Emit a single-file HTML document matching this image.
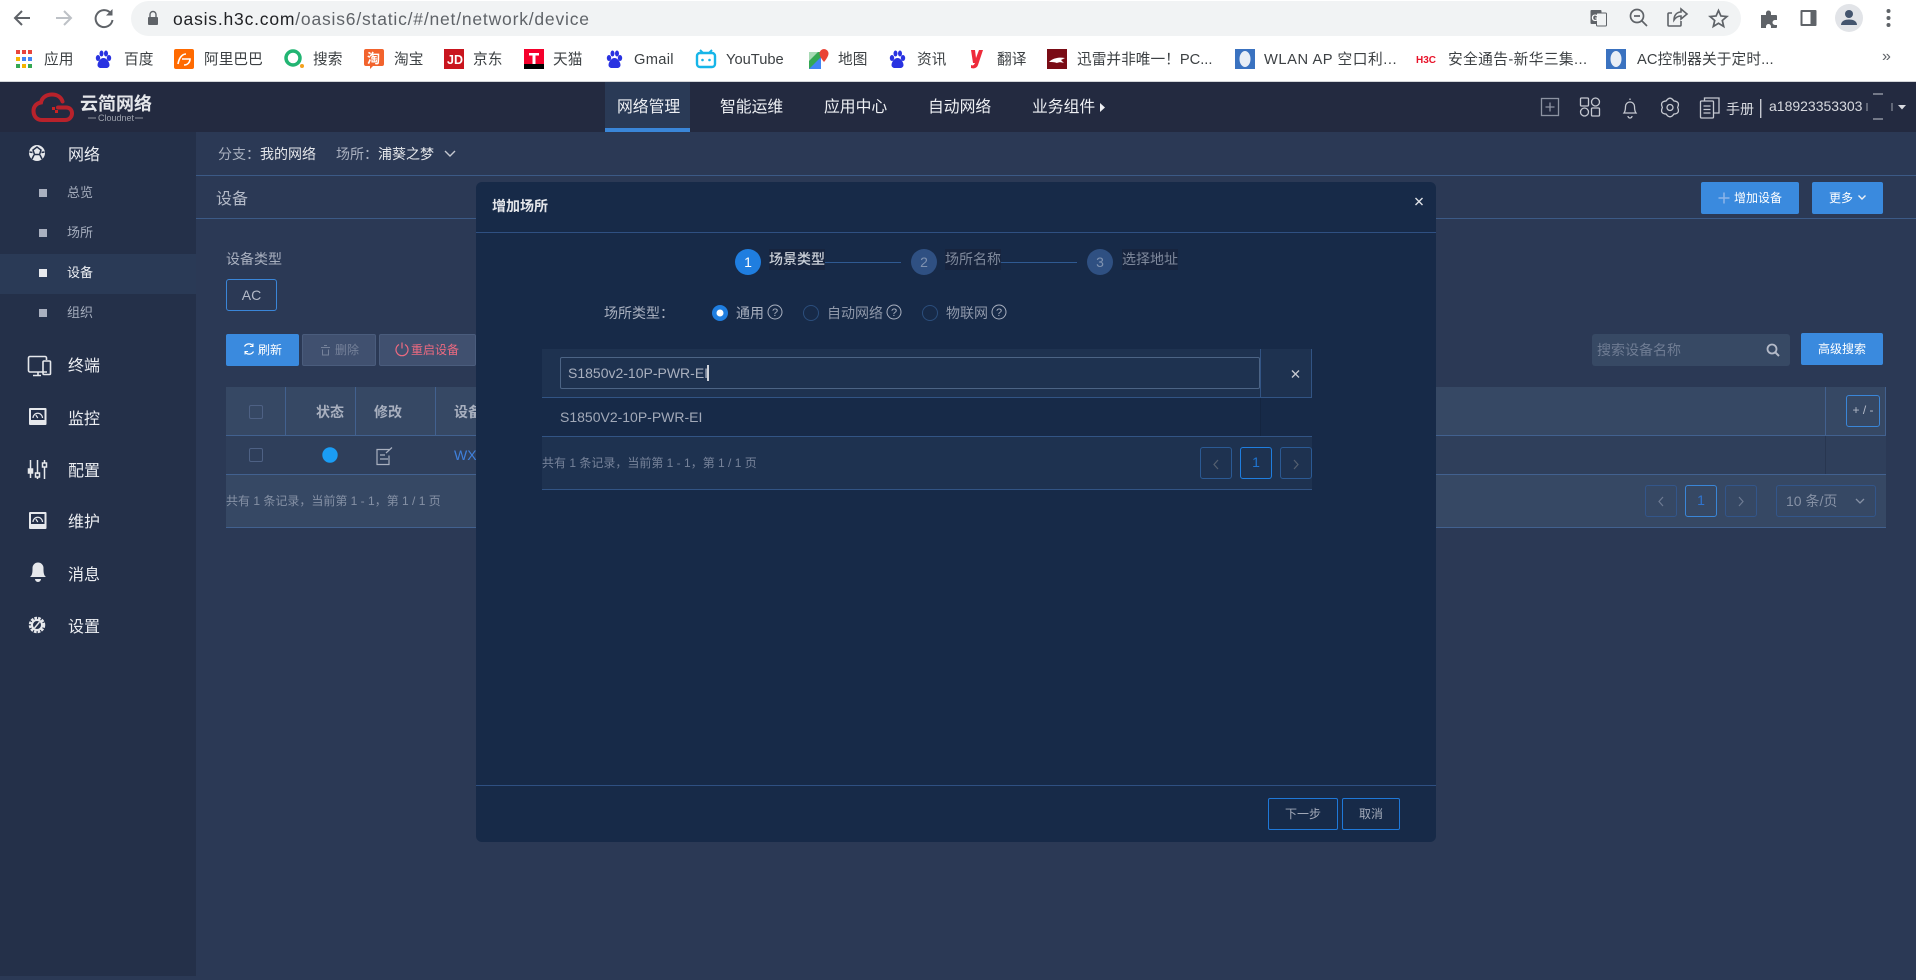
<!DOCTYPE html>
<html lang="zh"><head><meta charset="utf-8"><title>oasis</title>
<style>
html,body{margin:0;padding:0;width:1916px;height:980px;overflow:hidden;background:#2b3955}
body{position:relative;font-family:"Liberation Sans","Noto Sans CJK SC",sans-serif;font-size:14px;color:#c8ccd6}
.b,.t,svg.l{position:absolute}
.t{white-space:nowrap;line-height:20px}
svg.l{left:0;top:0;width:1916px;height:980px;pointer-events:none}
.bm{font-size:14.7px;color:#3c4043}
.nav{font-size:15.8px;color:#eef0f4}
.s1{font-size:16px;color:#eceef2}
.s2{font-size:13px;color:#a5adbd}
.g{color:#a9b0bf}
.btn{position:absolute;background:#3a8ade;border-radius:2px;color:#fff;text-align:center;box-sizing:border-box;line-height:32px;font-size:12px}
.pg{position:absolute;box-sizing:border-box;width:32px;height:32px;border:1px solid #33568a;border-radius:3px}
</style></head><body>

<!-- browser chrome -->
<div class="b" style="left:0;top:0;width:1916px;height:81px;background:#fff"></div>
<div class="b" style="left:0;top:81px;width:1916px;height:1px;background:#d3d5d9"></div>
<div class="b" style="left:131px;top:1px;width:1610px;height:35px;border-radius:18px;background:#f1f3f4"></div>
<div class="t" style="left:173px;top:9px;font-size:17.5px;letter-spacing:.8px;color:#5f6368;line-height:20px"><span style="color:#202124">oasis.h3c.com</span>/oasis6/static/#/net/network/device</div>
<div class="t bm" style="left:44px;top:50px">应用</div>
<div class="t bm" style="left:124px;top:50px">百度</div>
<div class="t bm" style="left:204px;top:50px">阿里巴巴</div>
<div class="t bm" style="left:313px;top:50px">搜索</div>
<div class="t bm" style="left:394px;top:50px">淘宝</div>
<div class="t bm" style="left:473px;top:50px">京东</div>
<div class="t bm" style="left:553px;top:50px">天猫</div>
<div class="t bm" style="left:634px;top:50px;letter-spacing:.3px">Gmail</div>
<div class="t bm" style="left:726px;top:50px">YouTube</div>
<div class="t bm" style="left:838px;top:50px">地图</div>
<div class="t bm" style="left:917px;top:50px">资讯</div>
<div class="t bm" style="left:997px;top:50px">翻译</div>
<div class="t bm" style="left:1077px;top:50px">迅雷并非唯一！PC...</div>
<div class="t bm" style="left:1264px;top:50px;letter-spacing:.55px">WLAN AP 空口利...</div>
<div class="t bm" style="left:1448px;top:50px;letter-spacing:.4px">安全通告-新华三集...</div>
<div class="t bm" style="left:1637px;top:50px;letter-spacing:.1px">AC控制器关于定时...</div>
<div class="t bm" style="left:1882px;top:47px;font-size:16px;color:#5f6368">»</div>

<!-- nav -->
<div class="b" style="left:0;top:82px;width:1916px;height:50px;background:#232a40"></div>
<div class="b" style="left:605px;top:82px;width:85px;height:50px;background:#2a3a56"></div>
<div class="b" style="left:605px;top:128px;width:85px;height:4px;background:#3a86d8"></div>
<div class="t nav" style="left:617px;top:98px">网络管理</div>
<div class="t nav" style="left:720px;top:98px">智能运维</div>
<div class="t nav" style="left:824px;top:98px">应用中心</div>
<div class="t nav" style="left:928px;top:98px">自动网络</div>
<div class="t nav" style="left:1032px;top:98px">业务组件</div>
<div class="t" style="left:80px;top:94px;font-size:18px;font-weight:700;color:#e4e6ea">云简网络</div>
<div class="t" style="left:98px;top:111px;font-size:9px;color:#9ea3ad;line-height:14px">Cloudnet</div>
<div class="t" style="left:1726px;top:99px;font-size:14px;color:#d8dae0">手册</div>
<div class="t" style="left:1769px;top:96px;font-size:14px;color:#d8dae0">a18923353303</div>

<!-- sidebar -->
<div class="b" style="left:0;top:132px;width:196px;height:844px;background:#243049"></div>
<div class="b" style="left:0;top:254px;width:196px;height:40px;background:#2a3a56"></div>
<div class="t s1" style="left:68px;top:146px">网络</div>
<div class="t s2" style="left:67px;top:183px">总览</div>
<div class="t s2" style="left:67px;top:223px">场所</div>
<div class="t s2" style="left:67px;top:263px;color:#eef0f4">设备</div>
<div class="t s2" style="left:67px;top:303px">组织</div>
<div class="t s1" style="left:68px;top:357px">终端</div>
<div class="t s1" style="left:68px;top:410px">监控</div>
<div class="t s1" style="left:68px;top:462px">配置</div>
<div class="t s1" style="left:68px;top:513px">维护</div>
<div class="t s1" style="left:68px;top:566px">消息</div>
<div class="t s1" style="left:68px;top:618px">设置</div>

<!-- breadcrumb and titlebar -->
<div class="b" style="left:196px;top:175px;width:1720px;height:1px;background:#3c5a86"></div>
<div class="b" style="left:196px;top:218px;width:1720px;height:1px;background:#3c5a86"></div>
<div class="t g" style="left:218px;top:144px">分支：</div>
<div class="t" style="left:260px;top:144px;color:#e4e6ea">我的网络</div>
<div class="t g" style="left:336px;top:144px">场所：</div>
<div class="t" style="left:378px;top:144px;color:#e4e6ea">浦葵之梦</div>
<div class="t" style="left:216px;top:190px;font-size:16px;color:#b4bac8">设备</div>
<div class="btn" style="left:1701px;top:182px;width:98px;height:32px;text-align:left;padding-left:33px">增加设备</div>
<div class="btn" style="left:1812px;top:182px;width:71px;height:32px;text-align:left;padding-left:17px">更多</div>

<!-- content -->
<div class="t g" style="left:226px;top:249px">设备类型</div>
<div class="b" style="left:226px;top:279px;width:51px;height:32px;box-sizing:border-box;border:1px solid #3a86d8;border-radius:3px;text-align:center;line-height:30px;color:#b4bac8">AC</div>
<div class="btn" style="left:226px;top:334px;width:73px;height:32px;text-align:left;padding-left:32px">刷新</div>
<div class="btn" style="left:302px;top:334px;width:74px;height:32px;background:#40506f;border:1px solid #4a5c7c;color:#76829a;text-align:left;padding-left:32px;line-height:30px">删除</div>
<div class="btn" style="left:379px;top:334px;width:97px;height:32px;background:#40506f;border:1px solid #4a5c7c;color:#ec6a80;text-align:left;padding-left:31px;line-height:30px">重启设备</div>
<div class="b" style="left:1592px;top:334px;width:198px;height:32px;background:#374964;border-radius:3px"></div>
<div class="t" style="left:1597px;top:340px;color:#6f7c93">搜索设备名称</div>
<div class="btn" style="left:1801px;top:333px;width:82px;height:32px">高级搜索</div>

<div class="b" style="left:226px;top:387px;width:1660px;height:48px;background:#364864"></div>
<div class="b" style="left:226px;top:435px;width:1660px;height:1px;background:#42618f"></div>
<div class="b" style="left:226px;top:436px;width:1660px;height:38px;background:#2f3f5b"></div>
<div class="b" style="left:226px;top:474px;width:1660px;height:1px;background:#42618f"></div>
<div class="b" style="left:226px;top:475px;width:1660px;height:52px;background:#364864"></div>
<div class="b" style="left:226px;top:527px;width:1660px;height:1px;background:#42618f"></div>
<div class="b" style="left:285px;top:387px;width:1px;height:48px;background:#42618f"></div>
<div class="b" style="left:355px;top:387px;width:1px;height:48px;background:#42618f"></div>
<div class="b" style="left:435px;top:387px;width:1px;height:48px;background:#42618f"></div>
<div class="b" style="left:1825px;top:387px;width:1px;height:48px;background:#42618f"></div>
<div class="b" style="left:1825px;top:436px;width:1px;height:38px;background:#283650"></div>
<div class="b" style="left:1885px;top:387px;width:1px;height:48px;background:#42618f"></div>
<div class="t g" style="left:316px;top:402px;font-weight:700">状态</div>
<div class="t g" style="left:374px;top:402px;font-weight:700">修改</div>
<div class="t g" style="left:454px;top:402px;font-weight:700">设备</div>
<div class="t" style="left:454px;top:445px;color:#3f80dc;font-size:14px">WX</div>
<div class="t" style="left:226px;top:491px;font-size:12px;color:#8691a5">共有 1 条记录，当前第 1 - 1，第 1 / 1 页</div>
<div class="b" style="left:1846px;top:395px;width:34px;height:32px;box-sizing:border-box;border:1px solid #3a86d8;border-radius:3px;text-align:center;line-height:29px;font-size:12px;color:#b4bac8">+ / -</div>
<div class="pg" style="left:1645px;top:485px"></div>
<div class="pg" style="left:1685px;top:485px;border-color:#3a86d8;text-align:center;line-height:29px;color:#2f74d0;font-size:14px">1</div>
<div class="pg" style="left:1725px;top:485px"></div>
<div class="pg" style="left:1776px;top:485px;width:100px"></div>
<div class="t" style="left:1786px;top:491px;color:#8691a5;font-size:14px">10 条/页</div>

<!-- page icons -->
<svg class="l" viewBox="0 0 1916 980" fill="none">
 <!-- chrome toolbar -->
 <path d="M30 18H16M22 11l-7 7 7 7" stroke="#5f6368" stroke-width="2"/>
 <path d="M56 18h14M64 11l7 7-7 7" stroke="#bdc1c6" stroke-width="2"/>
 <path d="M110.500 13a8.500 8.500 0 1 0 2 7" stroke="#5f6368" stroke-width="2"/><path d="M112.500 9v6.500H106z" fill="#5f6368"/>
 <rect x="148" y="17" width="10" height="8" rx="1" fill="#5f6368"/><path d="M150 17v-2.500a3 3 0 0 1 6 0V17" stroke="#5f6368" stroke-width="1.400"/>
 <g transform="translate(-1.500,0)"><rect x="1592" y="10" width="11" height="14" rx="1" fill="#5f6368"/><rect x="1598" y="13" width="10" height="13" rx="1" fill="#f1f3f4" stroke="#5f6368"/><text x="1593" y="21" font-size="9" font-weight="700" fill="#fff" font-family="Liberation Sans">G</text></g>
 <g transform="translate(-3,0)"><circle cx="1640" cy="16" r="6.500" stroke="#5f6368" stroke-width="1.700"/><path d="M1637 16h6M1645 21l5 5" stroke="#5f6368" stroke-width="1.700"/></g>
 <g transform="translate(-6,0)"><path d="M1678 13h-3a1 1 0 0 0-1 1v11a1 1 0 0 0 1 1h11a1 1 0 0 0 1-1v-4M1680 20c0-5 3-8 7-8V9l6 5-6 5v-3c-3 0-5 1-7 4z" stroke="#5f6368" stroke-width="1.600"/></g>
 <path d="M1718.500 10.500l2.400 5.500 6 .5-4.600 4 1.400 6-5.200-3.200-5.200 3.200 1.400-6-4.600-4 6-.5z" stroke="#5f6368" stroke-width="1.700"/>
 <g transform="translate(-2,0)"><path d="M1763 15h5v-2a2.500 2.500 0 0 1 5 0v2h5a1 1 0 0 1 1 1v4h-2a2.500 2.500 0 0 0 0 5h2v2a1 1 0 0 1-1 1h-5v-1.500a2.500 2.500 0 0 0-5 0V28h-5z" fill="#5f6368"/></g>
 <g transform="translate(-3.500,0)"><rect x="1804" y="10" width="16" height="16" rx="1" fill="#5f6368"/><rect x="1806" y="12" width="8" height="12" fill="#fff"/></g>
 <g transform="translate(-4,0)"><circle cx="1853" cy="18" r="14" fill="#e2e4e8"/><circle cx="1853" cy="14" r="4" fill="#44556e"/><path d="M1845 25c0-4 4-5.500 8-5.500s8 1.500 8 5.500z" fill="#44556e"/></g>
 <g transform="translate(-3.500,0)"><circle cx="1892" cy="11" r="2" fill="#5f6368"/><circle cx="1892" cy="18" r="2" fill="#5f6368"/><circle cx="1892" cy="25" r="2" fill="#5f6368"/></g>

 <!-- bookmark favicons -->
 <g><rect x="16" y="50" width="4" height="4" fill="#e8453c"/><rect x="22" y="50" width="4" height="4" fill="#e8453c"/><rect x="28" y="50" width="4" height="4" fill="#e8453c"/>
 <rect x="16" y="57" width="4" height="4" fill="#f4b400"/><rect x="22" y="57" width="4" height="4" fill="#4285f4"/><rect x="28" y="57" width="4" height="4" fill="#4285f4"/>
 <rect x="16" y="64" width="4" height="4" fill="#34a853"/><rect x="22" y="64" width="4" height="4" fill="#f4b400"/><rect x="28" y="64" width="4" height="4" fill="#34a853"/></g>
 <g fill="#2932e1"><ellipse cx="98" cy="58" rx="2.200" ry="3"/><ellipse cx="101.500" cy="53.500" rx="2" ry="3"/><ellipse cx="106" cy="53.500" rx="2" ry="3"/><ellipse cx="109" cy="58" rx="2.200" ry="3"/><path d="M103.500 58c-3 0-6 4-6 7 0 2 2 3 3 3h6c1 0 3-1 3-3 0-3-3-7-6-7z"/></g>
 <g fill="#2932e1"><ellipse cx="609" cy="58" rx="2.200" ry="3"/><ellipse cx="612.500" cy="53.500" rx="2" ry="3"/><ellipse cx="617" cy="53.500" rx="2" ry="3"/><ellipse cx="620" cy="58" rx="2.200" ry="3"/><path d="M614.500 58c-3 0-6 4-6 7 0 2 2 3 3 3h6c1 0 3-1 3-3 0-3-3-7-6-7z"/></g>
 <g fill="#2932e1"><ellipse cx="892" cy="58" rx="2.200" ry="3"/><ellipse cx="895.500" cy="53.500" rx="2" ry="3"/><ellipse cx="900" cy="53.500" rx="2" ry="3"/><ellipse cx="903" cy="58" rx="2.200" ry="3"/><path d="M897.500 58c-3 0-6 4-6 7 0 2 2 3 3 3h6c1 0 3-1 3-3 0-3-3-7-6-7z"/></g>
 <rect x="174" y="49" width="20" height="20" rx="2" fill="#ff6a00"/><path d="M178 64c1-6 4-10 8-10M182 59h8c0 3-2 6-6 6" stroke="#fff" stroke-width="1.600"/>
 <circle cx="293" cy="58" r="7" stroke="#22b573" stroke-width="3.500"/><circle cx="302" cy="66" r="2" fill="#f4a11d"/>
 <path d="M366 49h16a2 2 0 0 1 2 2v13a2 2 0 0 1-2 2h-9l-3 3v-3h-4a2 2 0 0 1-2-2V51a2 2 0 0 1 2-2z" fill="#f2632d"/><text x="367" y="63" font-size="13" font-weight="700" fill="#fff" font-family="Noto Sans CJK SC">淘</text>
 <rect x="444" y="49" width="20" height="20" fill="#c9151e"/><text x="447" y="64" font-size="12.500" fill="#fff" font-weight="700" font-family="Liberation Sans">JD</text>
 <rect x="524" y="49" width="20" height="20" fill="#f5002b"/><path d="M524 64h20v5h-20z" fill="#000"/><path d="M529 53h10v2.500h-3.500V64h-3V55.500H529z" fill="#fff"/>
 <path d="M700 50l3 3M712 50l-3 3" stroke="#16b5e8" stroke-width="2"/><rect x="697" y="53" width="18" height="14" rx="3" stroke="#16b5e8" stroke-width="2.400"/><circle cx="702.500" cy="60" r="1.300" fill="#16b5e8"/><circle cx="709.500" cy="60" r="1.300" fill="#16b5e8"/>
 <path d="M809 52h12v17h-12z" fill="#34a853"/><path d="M809 69l12-12v12z" fill="#4285f4"/><path d="M809 52h9l-9 9z" fill="#a8dab5"/><path d="M824 49a4.500 4.500 0 0 0-4.500 4.500c0 3.500 4.500 8.500 4.500 8.500s4.500-5 4.500-8.500A4.500 4.500 0 0 0 824 49z" fill="#ea4335"/>
 <path d="M971 50h4l1 8 3-8h4l-5 15c-1 3-4 4-7 3v-3c2 1 3 0 4-2h-2z" fill="#ee2b3b"/>
 <rect x="1047" y="49" width="20" height="20" fill="#7a0c16"/><path d="M1049 62c4-4 10-5 16-4l-4 2 3 3c-3-1-5-1-7 0-3-1-5-1-8-1z" fill="#fff"/>
 <rect x="1235" y="49" width="20" height="20" fill="#3a72c0"/><ellipse cx="1245" cy="59" rx="5.500" ry="8" fill="#e8eef6"/>
 <text x="1416" y="63" font-size="10" font-weight="700" fill="#e8132a" font-family="Liberation Sans">H3C</text>
 <rect x="1606" y="49" width="20" height="20" fill="#3a72c0"/><ellipse cx="1616" cy="59" rx="5.500" ry="8" fill="#e8eef6"/>

 <!-- logo -->
 <path d="M47 120H42C35 120 33.500 114 33.500 111C33.500 106 37 103 41 102.500C42 97 47 94.500 52 94.500C57 94.500 61 97 62.500 101.500M47 120H65C70 120 72 116 72 113.500C72 110 70 107.500 66 107.500H58" stroke="#b8222b" stroke-width="4" stroke-linecap="round"/>
 <rect x="52" y="107" width="3" height="3" fill="#c22"/><rect x="55" y="110" width="3" height="3" fill="#c22"/>
 <path d="M88 118h8M135 118h8" stroke="#8f949e"/>

 <path d="M1100 103l5 4.500-5 4.500z" fill="#eef0f4"/>
 <!-- top right icons -->
 <rect x="1541.500" y="98.500" width="17" height="17" stroke="#8d93a2" stroke-width="1.300"/><path d="M1550 102.500v9M1545.500 107h9" stroke="#8d93a2" stroke-width="1.300"/>
 <g stroke="#c5c8d0" stroke-width="1.300"><rect x="1580.500" y="98" width="8" height="8" rx="1"/><circle cx="1595.500" cy="102" r="4"/><circle cx="1584.500" cy="112" r="4"/><rect x="1591.500" y="108" width="8" height="8" rx="1"/>
 <path d="M1624 113c1.500-2 1.500-4 1.500-6.500a4.500 4.500 0 0 1 9 0c0 2.500 0 4.500 1.500 6.500z M1628 116a2 2 0 0 0 4 0M1630 100v-1.500"/>
 <path d="M1677.600 107.500Q1680.400 113.500 1673.800 114.080Q1670 119.500 1666.200 114.080Q1659.600 113.500 1662.400 107.500Q1659.600 101.500 1666.200 100.920Q1670 95.500 1673.800 100.920Q1680.400 101.500 1677.600 107.500z" stroke-linejoin="round"/><circle cx="1670" cy="107.500" r="3"/>
 <rect x="1700.500" y="101" width="13" height="17" rx="1"/><path d="M1704.500 101v-3h14.500v15h-5.500M1703.500 106h7M1703.500 109.500h7M1703.500 113h7"/></g>
 <rect x="1760" y="99" width="1.400" height="19" fill="#c5c8d0"/>
 <path d="M1867 103v8M1892 103v8" stroke="#9ea3ad"/><path d="M1873 94h10M1873 119h10" stroke="#c5c8d0"/><path d="M1898 105h8l-4 4.500z" fill="#d8dae0"/>

 <!-- sidebar icons -->
 <circle cx="37" cy="153" r="8" fill="#e6e8ec"/><path d="M37 147l-4 3 1.500 4.500h5L41 150zM29.500 152l3 .5M44.500 152l-3 .5M34 155l-2 4M40 155l2 4" stroke="#243049" stroke-width="1.500"/>
 <rect x="39" y="189" width="8" height="8" fill="#a9b0bf"/><rect x="39" y="229" width="8" height="8" fill="#a9b0bf"/><rect x="39" y="269" width="8" height="8" fill="#e8eaee"/><rect x="39" y="309" width="8" height="8" fill="#a9b0bf"/>
 <path d="M47 372H30a1.500 1.500 0 0 1-1.500-1.500V358a1.500 1.500 0 0 1 1.500-1.500h15a1.500 1.500 0 0 1 1.500 1.500v2M38 372v3M33 375.500h8" stroke="#e6e8ec" stroke-width="1.600"/><rect x="43" y="361" width="7.500" height="13.500" rx="1" stroke="#e6e8ec" stroke-width="1.600"/>
 <g><rect x="29" y="408" width="17.500" height="17" rx="1" fill="#e6e8ec"/><rect x="31" y="410" width="13.500" height="10" fill="#243049"/><path d="M33 418a4.700 4.700 0 0 1 9.500 0M37.800 418l-2-3" stroke="#e6e8ec" stroke-width="1.200"/></g>
 <g><rect x="29" y="512" width="17.500" height="17" rx="1" fill="#e6e8ec"/><rect x="31" y="514" width="13.500" height="10" fill="#243049"/><path d="M33 522a4.700 4.700 0 0 1 9.500 0M37.800 522l-2-3" stroke="#e6e8ec" stroke-width="1.200"/></g>
 <g stroke="#e6e8ec" stroke-width="1.500"><path d="M30.500 460v9M30.500 473v5M37.500 460v14M37.500 477v2M44.500 460v3M44.500 467v12"/><rect x="28.500" y="469" width="4" height="4" fill="#e6e8ec"/><rect x="35.500" y="473" width="4" height="4"/><rect x="42.500" y="463" width="4" height="4"/></g>
 <path d="M30 577c2.500-2 2.500-5 2.500-9a5.500 5.500 0 0 1 11 0c0 4 0 7 2.500 9zM35 579a3 3 0 0 0 6 0" fill="#e6e8ec"/>
 <circle cx="37" cy="625" r="6.500" stroke="#e6e8ec" stroke-width="3.500" stroke-dasharray="2.500 1"/><circle cx="37" cy="625" r="5" stroke="#e6e8ec" stroke-width="2"/><path d="M34.500 628l5-6" stroke="#e6e8ec" stroke-width="1.500"/>

 <path d="M445 151l5 5 5-5" stroke="#c5c8d0" stroke-width="1.400"/>
 <path d="M1724 192.500v11M1718.500 198h11" stroke="#8cb4e8" stroke-width="1.500"/>
 <path d="M1858.500 195.500l3.500 3.500 3.500-3.500" stroke="#eef0f4" stroke-width="1.400"/>

 <path d="M244.500 346.500a5 5 0 0 1 8.500-.5M253.500 351.500a5 5 0 0 1-8.500 .5" stroke="#fff" stroke-width="1.300"/><path d="M253 343.500v3h-3M245 354.500v-3h3" stroke="#fff"/>
 <path d="M321 347.500h9M322.500 349.500v5.500h6v-5.500M324 345.500h3" stroke="#76829a"/>
 <path d="M399 344.500a6 6 0 1 0 6 0M402 342.500v6" stroke="#ec6a80" stroke-width="1.200"/>
 <circle cx="1772" cy="349" r="4.500" stroke="#b4bac8" stroke-width="1.800"/><path d="M1775.500 352.500l3.500 3.500" stroke="#b4bac8" stroke-width="2"/>

 <rect x="249.500" y="405.500" width="13" height="13" rx="1.500" stroke="#4e6184"/>
 <rect x="249.500" y="448.500" width="13" height="13" rx="1.500" stroke="#4e6184"/>
 <circle cx="330" cy="455" r="7.700" fill="#1a9df5"/>
 <path d="M390 449.500h-13v15h12v-9M380 455h5M380 459h8M386 453l6-5.500" stroke="#a9b0bf" stroke-width="1.200"/>

 <path d="M1663 497l-4 4.500 4 4.500" stroke="#6d7a92" stroke-width="1.200"/>
 <path d="M1739 497l4 4.500-4 4.500" stroke="#6d7a92" stroke-width="1.200"/>
 <path d="M1856 499l4 4 4-4" stroke="#8691a5" stroke-width="1.300"/>
</svg>

<!-- modal -->
<div class="b" style="left:476px;top:182px;width:960px;height:660px;background:#172a48;border-radius:6px"></div>
<div class="b" style="left:476px;top:232px;width:960px;height:1px;background:#2f5082"></div>
<div class="b" style="left:476px;top:785px;width:960px;height:1px;background:#2f5082"></div>
<div class="t" style="left:492px;top:196px;font-size:14px;font-weight:700;color:#e4e6ea">增加场所</div>

<div class="b" style="left:825px;top:262px;width:76px;height:1px;background:#2f5a92"></div>
<div class="b" style="left:1001px;top:262px;width:76px;height:1px;background:#2f5a92"></div>
<div class="b" style="left:769px;top:249px;width:56px;height:21px;background:#17243e"></div>
<div class="b" style="left:945px;top:249px;width:56px;height:21px;background:#17243e"></div>
<div class="b" style="left:1122px;top:249px;width:56px;height:21px;background:#17243e"></div>
<div class="t" style="left:769px;top:249px;color:#cbd0d8;font-weight:500">场景类型</div>
<div class="t" style="left:945px;top:249px;color:#7f899c">场所名称</div>
<div class="t" style="left:1122px;top:249px;color:#7f899c">选择地址</div>
<div class="b" style="left:735px;top:249px;width:26px;height:26px;border-radius:50%;background:#1f7ee0;text-align:center;line-height:26px;color:#fff">1</div>
<div class="b" style="left:911px;top:249px;width:26px;height:26px;border-radius:50%;background:#2f5082;text-align:center;line-height:26px;color:#7f92b0">2</div>
<div class="b" style="left:1087px;top:249px;width:26px;height:26px;border-radius:50%;background:#2f5082;text-align:center;line-height:26px;color:#7f92b0">3</div>

<div class="t" style="left:604px;top:303px;font-size:14px;color:#a9b0bf">场所类型：</div>
<div class="t" style="left:736px;top:303px;color:#a9b0bf">通用</div>
<div class="t" style="left:827px;top:303px;color:#8f98aa">自动网络</div>
<div class="t" style="left:946px;top:303px;color:#8f98aa">物联网</div>

<div class="b" style="left:542px;top:349px;width:770px;height:49px;background:#1e3250"></div>
<div class="b" style="left:542px;top:397px;width:770px;height:1px;background:#325484"></div>
<div class="b" style="left:542px;top:436px;width:770px;height:53px;background:#1e3250"></div>
<div class="b" style="left:542px;top:436px;width:770px;height:1px;background:#325484"></div>
<div class="b" style="left:542px;top:489px;width:770px;height:1px;background:#325484"></div>
<div class="b" style="left:1260px;top:349px;width:1px;height:49px;background:#325484"></div>
<div class="b" style="left:1311px;top:349px;width:1px;height:49px;background:#325484"></div>
<div class="b" style="left:1260px;top:398px;width:1px;height:38px;background:#142540"></div>
<div class="b" style="left:560px;top:357px;width:700px;height:32px;box-sizing:border-box;background:#1e3250;border:1px solid #4c6485;border-radius:2px"></div>
<div class="t" style="left:568px;top:363px;color:#a9b0bf">S1850v2-10P-PWR-EI</div>
<div class="b" style="left:707px;top:365px;width:1.500px;height:16px;background:#cfd3da"></div>
<div class="t" style="left:560px;top:407px;color:#a2a9b8">S1850V2-10P-PWR-EI</div>
<div class="t" style="left:542px;top:453px;font-size:12px;color:#77839a">共有 1 条记录，当前第 1 - 1，第 1 / 1 页</div>
<div class="pg" style="left:1200px;top:447px;border-color:#2b5a94"></div>
<div class="pg" style="left:1240px;top:447px;border-color:#1f7ee0;text-align:center;line-height:29px;color:#1f74d0;font-size:14px">1</div>
<div class="pg" style="left:1280px;top:447px;border-color:#2b5a94"></div>

<div class="b" style="left:1268px;top:798px;width:70px;height:32px;box-sizing:border-box;border:1px solid #1f78d8;border-radius:2px;text-align:center;line-height:30px;font-size:12px;color:#a2a9b8">下一步</div>
<div class="b" style="left:1342px;top:798px;width:58px;height:32px;box-sizing:border-box;border:1px solid #1f78d8;border-radius:2px;text-align:center;line-height:30px;font-size:12px;color:#a2a9b8">取消</div>

<svg class="l" viewBox="0 0 1916 980" fill="none">
 <path d="M1415.500 198l7 7M1422.500 198l-7 7" stroke="#dfe2e7" stroke-width="1.400"/>
 <circle cx="720" cy="313" r="8" fill="#1f7ee0"/><circle cx="720" cy="313" r="3.500" fill="#fff"/>
 <circle cx="811" cy="313" r="7.500" stroke="#2b4e7c"/><circle cx="930" cy="313" r="7.500" stroke="#2b4e7c"/>
 <g stroke="#a9b0bf"><circle cx="775" cy="312" r="7"/><circle cx="894" cy="312" r="7"/><circle cx="999" cy="312" r="7"/></g>
 <g fill="#a9b0bf" font-size="11" font-family="Liberation Sans" text-anchor="middle"><text x="775" y="316">?</text><text x="894" y="316">?</text><text x="999" y="316">?</text></g>
 <path d="M1292 370.500l7 7M1299 370.500l-7 7" stroke="#c5c8d0" stroke-width="1.400"/>
 <path d="M1218 460l-4 4.500 4 4.500" stroke="#55606f" stroke-width="1.200"/>
 <path d="M1294 460l4 4.500-4 4.500" stroke="#55606f" stroke-width="1.200"/>
</svg>
</body></html>
